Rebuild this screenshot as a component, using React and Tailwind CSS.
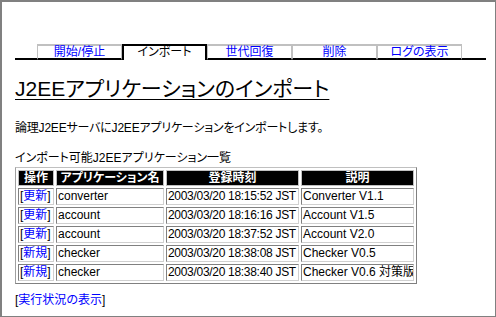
import React from "react";

const tabs = [
  { label: "開始/停止", active: false },
  { label: "インポート", active: true },
  { label: "世代回復", active: false },
  { label: "削除", active: false },
  { label: "ログの表示", active: false },
];

const rows = [
  ["更新", "converter", "2003/03/20 18:15:52 JST", "Converter V1.1"],
  ["更新", "account", "2003/03/20 18:16:16 JST", "Account V1.5"],
  ["更新", "account", "2003/03/20 18:37:52 JST", "Account V2.0"],
  ["新規", "checker", "2003/03/20 18:38:08 JST", "Checker V0.5"],
  ["新規", "checker", "2003/03/20 18:38:40 JST", "Checker V0.6 対策版"],
];

const font = "font-['Liberation_Sans','Noto_Sans_CJK_JP',sans-serif] [font-feature-settings:'palt']";

const cell =
  "h-[17px] box-border p-0 px-[1px] leading-[15px] border border-t-[#808080] border-l-[#808080] border-r-[#d0d0d0] border-b-[#d0d0d0] whitespace-nowrap overflow-hidden";

export default function App() {
  return (
    <div
      className={`w-[496px] h-[317px] box-border bg-white border-t-2 border-l-2 border-r border-b border-[#808080] pl-[13px] pr-[9px] text-[12px] leading-[16px] text-black ${font} overflow-hidden`}
    >
      {/* Tabs */}
      <div className="mt-[42px] flex items-end h-[16px]">
        <div className="w-[22px] h-[2px] bg-black" />
        {tabs.map((t) =>
          t.active ? (
            <div
              key={t.label}
              className="w-[85px] h-[16px] box-border border-t-2 border-x-2 border-black text-center leading-[13px] text-black"
            >
              {t.label}
            </div>
          ) : (
            <div
              key={t.label}
              className="w-[85px] h-[16px] box-border border-t-2 border-x border-b-2 border-x-[#c0c0c0] border-t-[#c0c0c0] border-b-black text-center leading-[12px] text-[#0000ff]"
            >
              {t.label}
            </div>
          )
        )}
        <div className="flex-1 h-[2px] bg-black" />
      </div>

      {/* Heading */}
      <h1 className="mt-[17px] text-[21px] leading-[24px] font-normal underline underline-offset-[3px] decoration-1">
        J2EEアプリケーションのインポート
      </h1>

      <p className="mt-[19px] tracking-[-0.2px]">論理J2EEサーバにJ2EEアプリケーションをインポートします。</p>

      <p className="mt-[14px]">インポート可能J2EEアプリケーション一覧</p>

      <table className="mt-[1px] w-[402px] table-fixed border-separate border-spacing-[2px] border border-t-[#c0c0c0] border-l-[#a0a0a0] border-r-[#808080] border-b-[#808080]">
        <colgroup>
          <col className="w-[36px]" />
          <col className="w-[108px]" />
          <col className="w-[133px]" />
          <col className="w-[113px]" />
        </colgroup>
        <thead>
          <tr>
            {["操作", "アプリケーション名", "登録時刻", "説明"].map((h) => (
              <th
                key={h}
                className="h-[16px] box-border p-0 bg-black text-white font-bold text-center leading-[14px] border border-[#c0c0c0] whitespace-nowrap overflow-hidden"
              >
                {h}
              </th>
            ))}
          </tr>
        </thead>
        <tbody>
          {rows.map((r, i) => (
            <tr key={i}>
              <td className={cell}>
                [<span className="text-[#0000ff]">{r[0]}</span>]
              </td>
              <td className={cell}>{r[1]}</td>
              <td className={`${cell} tracking-[-0.3px]`}>{r[2]}</td>
              <td className={cell}>{r[3]}</td>
            </tr>
          ))}
        </tbody>
      </table>

      <p className="mt-[8px]">
        [<span className="text-[#0000ff]">実行状況の表示</span>]
      </p>
    </div>
  );
}
